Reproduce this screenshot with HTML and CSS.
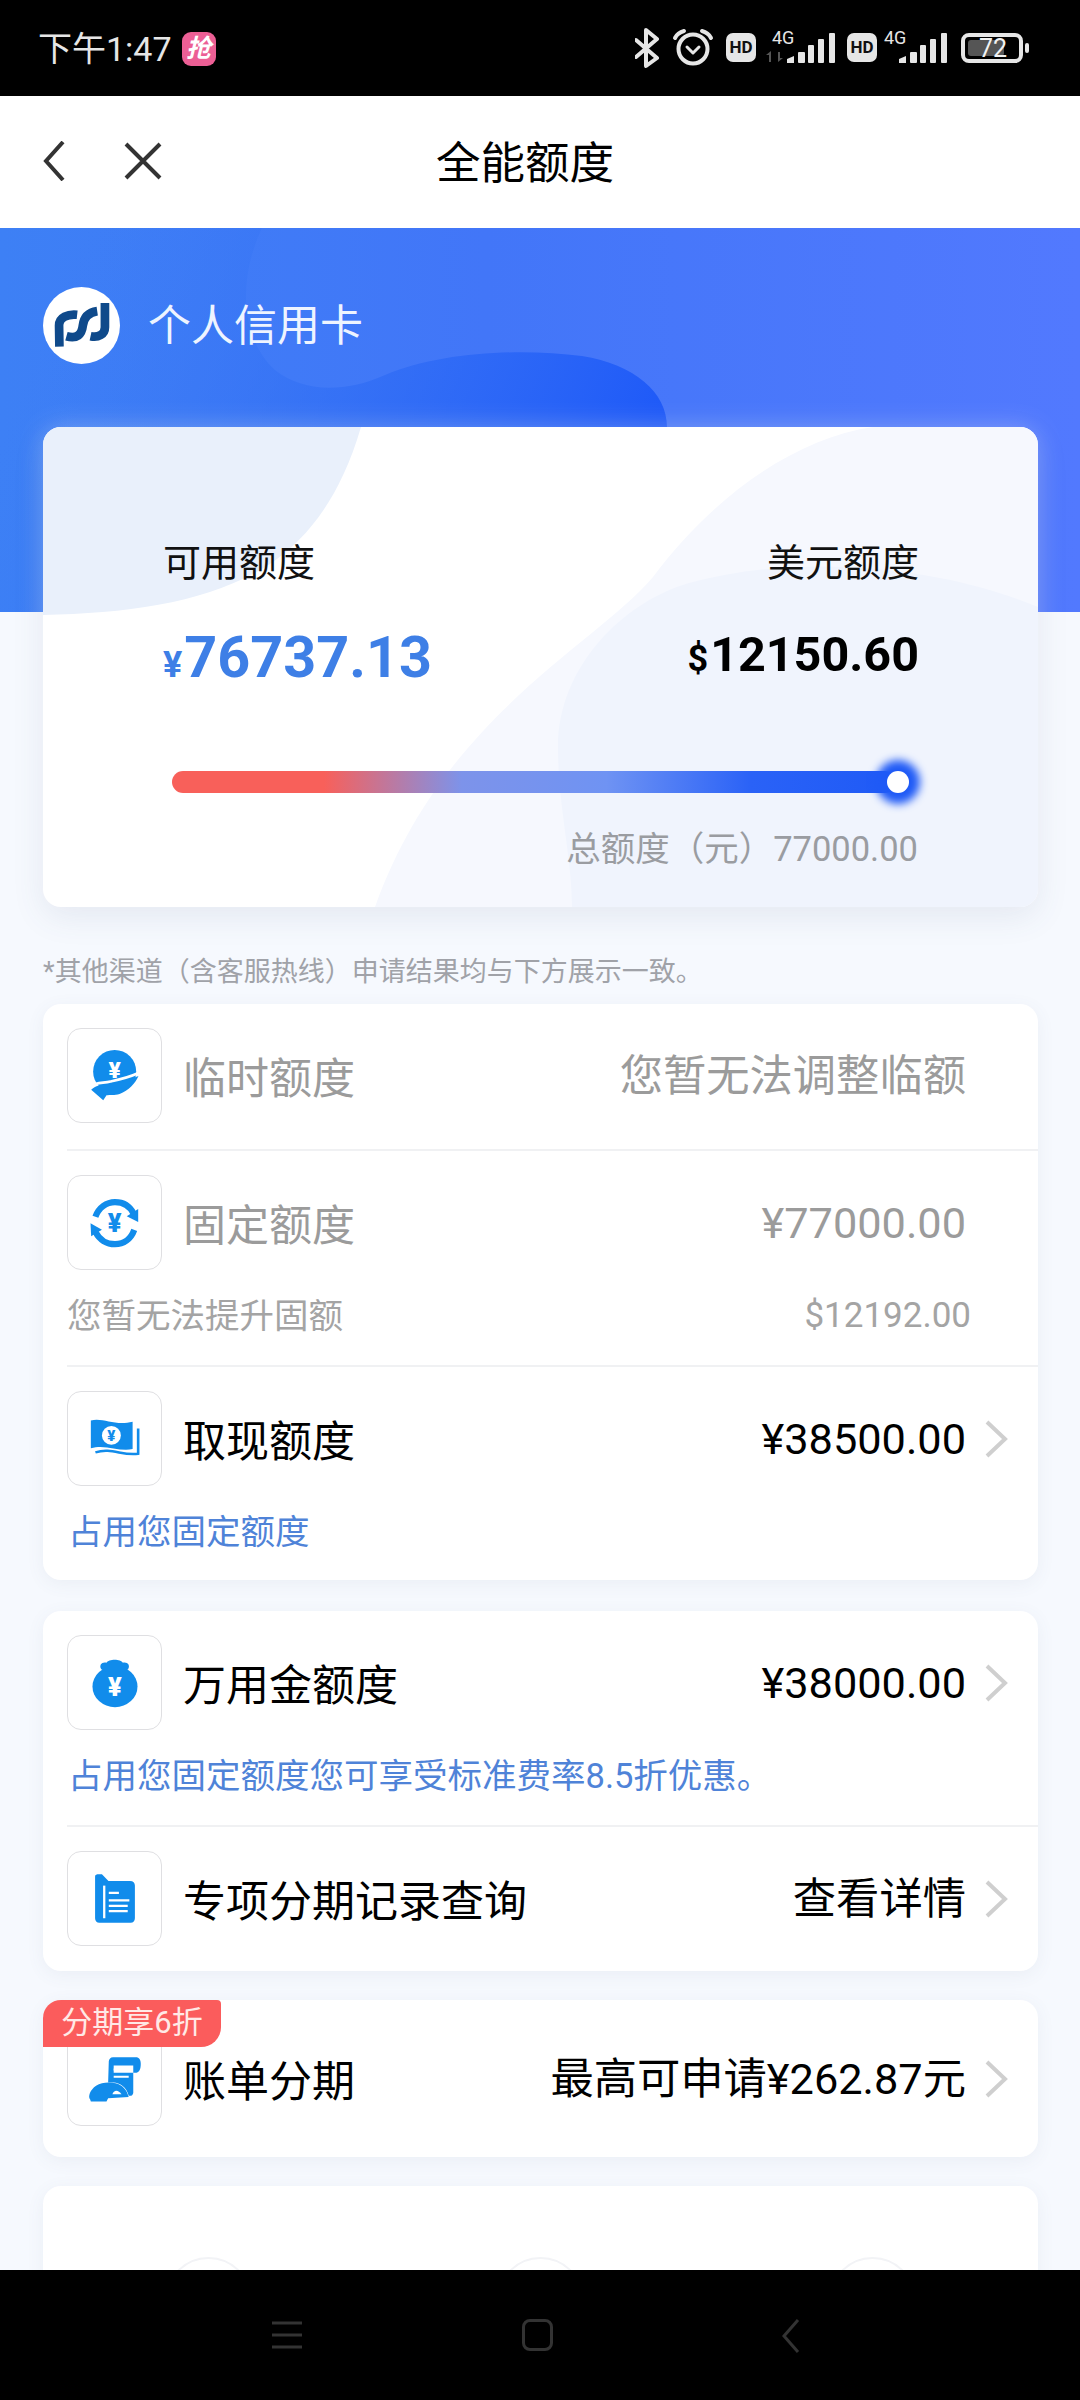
FILE: index.html
```html
<!DOCTYPE html>
<html lang="zh-CN">
<head>
<meta charset="utf-8">
<title>全能额度</title>
<link rel="stylesheet" href="styles.css">
</head>
<body>
<div class="phone">
  <header class="status-bar">
    <div class="status-left">
      <span class="clock">下午1:47</span>
      <span class="promo-tag">抢</span>
    </div>
    <svg class="status-icons" viewBox="635 0 394 96" width="394" height="96" aria-hidden="true">
      <!-- bluetooth -->
      <path class="glyph-line" d="M636 40 L657 58 L646 66 L646 30 L657 39 L636 57"/>
      <!-- alarm clock -->
      <circle class="glyph-line" cx="693" cy="49" r="14.5"/>
      <path class="glyph-line" d="M675 38 C677 34 680 32 684 31 M711 38 C709 34 706 32 702 31"/>
      <path class="glyph-line thin" d="M687 47 L693 53 L699 47"/>
      <!-- first SIM -->
      <rect class="glyph-fill" x="726" y="33" width="30" height="29" rx="7"/>
      <text class="hd-label" x="741" y="53">HD</text>
      <text class="net-label" x="772" y="44">4G</text>
      <path class="glyph-dim" d="M769 62 L769 55 L766 55 L771 51 L771 62 Z M778 52 L778 62 L783 58 L780 58 L780 52 Z"/>
      <g class="glyph-fill">
        <path d="M787 63 V59 L794 56 V63 Z"/>
        <rect x="798" y="52" width="7" height="11" rx="1"/>
        <rect x="808" y="45" width="6" height="18" rx="1"/>
        <rect x="818" y="39" width="6" height="24" rx="1"/>
        <rect x="829" y="33" width="6" height="30" rx="1"/>
      </g>
      <!-- second SIM -->
      <rect class="glyph-fill" x="847" y="33" width="30" height="29" rx="7"/>
      <text class="hd-label" x="862" y="53">HD</text>
      <text class="net-label" x="884" y="44">4G</text>
      <g class="glyph-fill">
        <path d="M899 63 V59 L906 56 V63 Z"/>
        <rect x="910" y="52" width="7" height="11" rx="1"/>
        <rect x="920" y="45" width="6" height="18" rx="1"/>
        <rect x="930" y="39" width="6" height="24" rx="1"/>
        <rect x="941" y="33" width="6" height="30" rx="1"/>
      </g>
      <!-- battery -->
      <rect class="glyph-line" x="963" y="35" width="58" height="26" rx="6"/>
      <rect class="glyph-level" x="968" y="40" width="36" height="16" rx="3"/>
      <rect class="glyph-fill" x="1025" y="43" width="4" height="10" rx="2"/>
      <text class="battery-label" x="993" y="57">72</text>
    </svg>
  </header>

  <main class="scroller">
    <nav class="title-bar">
      <div class="title-actions">
        <svg class="nav-back" viewBox="0 0 22 40" width="22" height="40" aria-hidden="true"><path d="M20 1 L3 20 L20 39"/></svg>
        <svg class="nav-close" viewBox="0 0 38 38" width="38" height="38" aria-hidden="true"><path d="M2 2 L36 36 M36 2 L2 36"/></svg>
      </div>
      <h1 class="page-title">全能额度</h1>
    </nav>

    <section class="hero">
      <svg class="hero-art" viewBox="0 0 1080 384" width="1080" height="384" aria-hidden="true">
        <defs>
          <linearGradient id="heroWave" gradientUnits="userSpaceOnUse" x1="60" y1="60" x2="640" y2="290">
            <stop offset="0" stop-color="#3a7cf4" stop-opacity="0"/>
            <stop offset="0.4" stop-color="#3270f4" stop-opacity=".6"/>
            <stop offset="1" stop-color="#1d58f8"/>
          </linearGradient>
        </defs>
        <path fill="url(#heroWave)" d="M0 0 L262 0 C238 50 240 110 275 142 C300 162 340 167 385 147 C440 124 520 120 582 128 C642 138 676 172 665 215 L665 384 L0 384 Z"/>
      </svg>
      <div class="brand">
        <svg class="brand-logo" viewBox="70 50 230 230" width="77" height="77" aria-hidden="true">
          <circle cx="185" cy="165" r="115" fill="#fff"/>
          <g class="brand-mark">
            <path d="M119 228 L118 165 C118 140 145 130 172 133"/>
            <path d="M140 197 C172 206 186 192 189 165 C192 140 205 126 232 122"/>
            <path d="M255 98 L255 170 C255 192 235 202 212 197"/>
          </g>
        </svg>
        <span class="brand-name">个人信用卡</span>
      </div>
    </section>

    <section class="limit-card">
      <svg class="limit-art" viewBox="0 0 995 480" preserveAspectRatio="none" aria-hidden="true">
        <path fill="#e9f0fb" d="M0 0 H318 C296 75 262 112 230 135 C170 175 90 186 0 188 Z"/>
        <path fill="#f6f8fe" d="M830 0 C750 12 670 70 610 150 C550 220 400 290 332 480 H995 V0 Z"/>
        <path fill="#f0f4fd" d="M995 180 C900 140 760 125 646 156 C580 175 515 240 515 320 C515 380 529 430 529 480 H995 Z"/>
      </svg>
      <div class="limit-columns">
        <div class="limit-col">
          <div class="limit-label">可用额度</div>
          <div class="limit-amount cny"><span class="unit">¥</span>76737.13</div>
        </div>
        <div class="limit-col end">
          <div class="limit-label">美元额度</div>
          <div class="limit-amount usd"><span class="unit">$</span>12150.60</div>
        </div>
      </div>
      <div class="meter">
        <div class="meter-track"></div>
        <span class="meter-thumb"></span>
      </div>
      <div class="limit-total">总额度（元）77000.00</div>
    </section>

    <p class="channel-note">*其他渠道（含客服热线）申请结果均与下方展示一致。</p>

    <section class="panel is-lead">
      <div class="item">
        <div class="item-main is-muted">
          <span class="icon-box">
            <svg viewBox="82 55 285 285" aria-hidden="true">
              <circle class="ico" cx="225" cy="185" r="66"/>
              <text class="ico-yen on-blue" x="225" y="204" font-size="70">¥</text>
              <path class="ico" d="M153 241 C168 226 185 226 212 224 C240 222 265 212 298 199 C288 222 268 244 240 254 C225 259 210 256 200 258 L190 273 Z"/>
              <path class="ico-cut" d="M150 232 C170 216 190 222 212 216 C240 210 265 205 298 190"/>
            </svg>
          </span>
          <span class="item-title">临时额度</span>
          <span class="item-value">您暂无法调整临额</span>
          <span class="chevron-slot"></span>
        </div>
      </div>
      <div class="item">
        <div class="item-main is-muted">
          <span class="icon-box">
            <svg viewBox="82 495 285 285" aria-hidden="true">
              <path class="ico-ring" d="M166 620 C176 592 200 575 226 575 C252 575 272 588 283 610"/>
              <path class="ico" d="M297 636 L262 618 L297 596 Z"/>
              <path class="ico-ring" d="M285 660 C275 688 252 704 226 704 C200 704 178 690 167 668"/>
              <path class="ico" d="M151 640 L186 660 L153 680 Z"/>
              <text class="ico-yen" x="225" y="668" font-size="78">¥</text>
            </svg>
          </span>
          <span class="item-title">固定额度</span>
          <span class="item-value">¥77000.00</span>
          <span class="chevron-slot"></span>
        </div>
        <div class="item-note is-split">
          <span>您暂无法提升固额</span>
          <span class="note-amount">$12192.00</span>
        </div>
      </div>
      <div class="item">
        <div class="item-main">
          <span class="icon-box">
            <svg viewBox="82 65 285 285" aria-hidden="true">
              <path class="ico" d="M152 152 C190 142 225 170 280 156 L280 240 C240 250 200 224 152 237 Z"/>
              <path class="ico-ring slim" d="M297 177 L297 254 C250 262 215 234 166 250"/>
              <circle class="ico-white" cx="215" cy="198" r="29"/>
              <text class="ico-yen" x="215" y="215" font-size="46">¥</text>
            </svg>
          </span>
          <span class="item-title">取现额度</span>
          <span class="item-value">¥38500.00</span>
          <span class="chevron-slot"><svg class="chevron" viewBox="0 0 23 38" width="23" height="38" aria-hidden="true"><path d="M2 2 L20 19 L2 36"/></svg></span>
        </div>
        <div class="item-note is-link">占用您固定额度</div>
      </div>
    </section>

    <section class="panel">
      <div class="item">
        <div class="item-main">
          <span class="icon-box">
            <svg viewBox="82 48 285 285" aria-hidden="true">
              <ellipse class="ico" cx="226" cy="203" rx="69" ry="63"/>
              <path class="ico" d="M184 150 C176 138 186 126 200 130 C206 118 244 118 250 130 C264 126 274 138 266 150 L250 158 H200 Z"/>
              <text class="ico-yen on-blue" x="226" y="231" font-size="78">¥</text>
            </svg>
          </span>
          <span class="item-title">万用金额度</span>
          <span class="item-value">¥38000.00</span>
          <span class="chevron-slot"><svg class="chevron" viewBox="0 0 23 38" width="23" height="38" aria-hidden="true"><path d="M2 2 L20 19 L2 36"/></svg></span>
        </div>
        <div class="item-note is-link">占用您固定额度您可享受标准费率8.5折优惠。</div>
      </div>
      <div class="item">
        <div class="item-main">
          <span class="icon-box">
            <svg viewBox="82 697 285 285" aria-hidden="true">
              <path class="ico" d="M165 772 C165 766 170 765 176 765 H186 L206 786 H272 C282 786 287 792 287 800 V900 C287 908 282 914 274 914 H178 C170 914 165 908 165 900 Z"/>
              <path class="ico-cut slim" d="M193 800 V900"/>
              <path class="ico-cut slim" d="M207 822 H238 M207 845 H270 M207 862 H265 M207 878 H265"/>
            </svg>
          </span>
          <span class="item-title">专项分期记录查询</span>
          <span class="item-value">查看详情</span>
          <span class="chevron-slot"><svg class="chevron" viewBox="0 0 23 38" width="23" height="38" aria-hidden="true"><path d="M2 2 L20 19 L2 36"/></svg></span>
        </div>
      </div>
    </section>

    <section class="panel has-ribbon">
      <span class="ribbon">分期享6折</span>
      <div class="item">
        <div class="item-main">
          <span class="icon-box">
            <svg viewBox="82 275 285 285" aria-hidden="true">
              <path class="ico" d="M220 352 H290 C300 352 305 360 305 372 C305 390 300 400 288 400 L282 400 V378 H222 V400 H282 V462 C280 470 275 472 268 470 C262 445 240 430 222 430 H205 L207 365 C208 358 212 352 220 352 Z"/>
              <path class="ico-cut thin" d="M222 390 H268 M222 412 H268"/>
              <path class="ico" d="M150 482 C142 474 150 452 168 440 C185 428 210 428 228 432 C250 438 262 452 268 474 L205 478 L200 488 L152 488 Z"/>
              <path class="ico-white" d="M218 466 C222 452 236 450 246 466 Z"/>
            </svg>
          </span>
          <span class="item-title">账单分期</span>
          <span class="item-value">最高可申请¥262.87元</span>
          <span class="chevron-slot"><svg class="chevron" viewBox="0 0 23 38" width="23" height="38" aria-hidden="true"><path d="M2 2 L20 19 L2 36"/></svg></span>
        </div>
      </div>
    </section>

    <section class="panel shortcuts">
      <span class="shortcut"></span>
      <span class="shortcut"></span>
      <span class="shortcut"></span>
    </section>
  </main>

  <footer class="system-nav">
    <svg viewBox="0 0 30 28" width="30" height="28" class="sys-menu" aria-hidden="true"><path d="M0 2 H30 M0 14 H30 M0 26 H30"/></svg>
    <span class="sys-home"></span>
    <svg viewBox="0 0 18 34" width="18" height="34" class="sys-back" aria-hidden="true"><path d="M16 1 L2 17 L16 33"/></svg>
  </footer>
</div>
</body>
</html>
```

FILE: styles.css
```css
* { box-sizing: border-box; }

html, body {
  margin: 0;
  padding: 0;
  background: #000;
}

body {
  font-family: Roboto, "Noto Sans CJK SC", sans-serif;
  color: #111;
}

.phone {
  width: 1080px;
  height: 2400px;
  display: flex;
  flex-direction: column;
  overflow: hidden;
}

/* Status bar */
.status-bar {
  flex: 0 0 96px;
  background: #000;
  display: flex;
  align-items: center;
  justify-content: space-between;
  padding: 0 51px 0 38px;
}

.status-left {
  display: flex;
  align-items: center;
  gap: 10px;
  margin-top: 2px;
}

.clock {
  font-size: 34px;
  line-height: 40px;
  color: #e6e6e6;
}

.promo-tag {
  width: 34px;
  height: 34px;
  border-radius: 9px;
  background: #ec5f95;
  color: #fff;
  font-size: 25px;
  line-height: 34px;
  font-weight: 700;
  font-style: italic;
  text-align: center;
}

.glyph-line {
  fill: none;
  stroke: #e6e6e6;
  stroke-width: 4;
  stroke-linecap: round;
  stroke-linejoin: round;
}
.glyph-line.thin { stroke-width: 3; }
.glyph-fill { fill: #e6e6e6; }
.glyph-dim { fill: #555; }
.glyph-level { fill: #555; }

.hd-label {
  font: 700 17px Roboto, sans-serif;
  fill: #111;
  text-anchor: middle;
}
.net-label {
  font: 400 18px Roboto, sans-serif;
  fill: #e6e6e6;
}
.battery-label {
  font: 400 25px Roboto, sans-serif;
  fill: #f2f2f2;
  text-anchor: middle;
}

/* Scrolling page */
.scroller {
  flex: 1 1 auto;
  min-height: 0;
  overflow: hidden;
  background: #f6f9fe;
}

.title-bar {
  height: 132px;
  background: #fff;
  display: grid;
  grid-template-columns: 180px 1fr 210px;
  align-items: center;
}

.title-actions {
  display: flex;
  align-items: center;
  gap: 59px;
  padding-left: 43px;
  margin-top: -3px;
}

.nav-back path,
.nav-close path {
  fill: none;
  stroke: #333;
  stroke-width: 4;
}

.page-title {
  margin: 3px 0 0;
  font-size: 44.5px;
  line-height: 60px;
  font-weight: 400;
  text-align: center;
  color: #000;
}

/* Blue header */
.hero {
  position: relative;
  height: 384px;
  background: linear-gradient(90deg, #3d80f5 0%, #4276f8 45%, #5279fe 100%);
  overflow: hidden;
}

.hero-art {
  position: absolute;
  left: 0;
  top: 0;
}

.brand {
  position: relative;
  display: flex;
  align-items: center;
  gap: 28px;
  padding: 59px 0 0 43px;
}

.brand-logo { display: block; }

.brand-mark path {
  fill: none;
  stroke: #0f4a8b;
  stroke-width: 26;
}

.brand-name {
  font-size: 43px;
  line-height: 60px;
  color: #eef4ff;
}

/* Limit summary card */
.limit-card {
  position: relative;
  height: 480px;
  margin: -185px 42px 0 43px;
  padding-top: 111px;
  border-radius: 18px;
  background: #fff;
  overflow: hidden;
  box-shadow: 0 10px 32px rgba(70, 90, 130, .1), 0 0 26px rgba(255, 255, 255, .3);
}

.limit-art {
  position: absolute;
  left: 0;
  top: 0;
  width: 100%;
  height: 100%;
}

.limit-columns {
  position: relative;
  display: flex;
  justify-content: space-between;
  padding: 0 119px 0 120px;
}

.limit-col.end { text-align: right; }

.limit-label {
  font-size: 38px;
  line-height: 50px;
  color: #111;
}

.limit-amount {
  margin-top: 30px;
  line-height: 80px;
  font-weight: 700;
  white-space: nowrap;
}

.limit-amount.cny {
  font-size: 57.5px;
  color: #3e7fe6;
}
.limit-amount.cny .unit { font-size: 36px; margin-right: 2px; }

.limit-amount.usd {
  font-size: 48.5px;
  line-height: 74px;
  color: #000;
}
.limit-amount.usd .unit { font-size: 36px; margin-right: 2px; }

.meter {
  position: relative;
  margin: 66px 142px 0 129px;
  height: 22px;
}

.meter-track {
  height: 100%;
  border-radius: 11px;
  background: linear-gradient(90deg, #f8605a 0%, #f8605a 21%, #7d93ea 40%, #6f93f3 60%, #2a62f7 80%, #1f5af6 100%);
}

/* Thumb sits over the track end */
.meter-thumb {
  position: absolute;
  right: -13px;
  top: 0;
  width: 22px;
  height: 22px;
  border-radius: 50%;
  background: #fff;
  box-shadow: 0 0 8px 11px #1f5af6;
}

.limit-total {
  position: relative;
  margin: 34px 120px 0 0;
  font-size: 34.5px;
  line-height: 44px;
  text-align: right;
  color: #9a9ca1;
}

.channel-note {
  margin: 45px 0 12px 43px;
  font-size: 27px;
  line-height: 40px;
  color: #a0a2a8;
}

/* Option panels */
.panel {
  position: relative;
  margin: 0 42px 29px 43px;
  border-radius: 18px;
  background: #fff;
  box-shadow: 0 4px 18px rgba(80, 95, 130, .07);
}

.panel.is-lead { margin-bottom: 31px; }

.item {
  padding: 25px 0 27px 24px;
}

.item:first-of-type { padding-top: 24px; }
.item:last-of-type { padding-bottom: 25px; }

.item + .item {
  position: relative;
}

/* Separator runs from the icon column to the panel edge */
.item + .item::before {
  content: "";
  position: absolute;
  left: 24px;
  right: 0;
  top: -1px;
  height: 2px;
  background: #f0f1f3;
}

.item-main {
  display: flex;
  align-items: center;
  padding-right: 30px;
}

.icon-box {
  flex: 0 0 95px;
  width: 95px;
  height: 95px;
  border: 1.5px solid #dfdfe2;
  border-radius: 14px;
  background: #fff;
  margin-right: 21px;
}

.icon-box svg {
  display: block;
  width: 100%;
  height: 100%;
}

.item-title {
  flex: 1 1 auto;
  font-size: 43px;
  line-height: 60px;
  color: #000;
  margin-top: 6px;
}

.item-value {
  font-size: 43.3px;
  line-height: 60px;
  color: #000;
  white-space: nowrap;
  margin-top: 3px;
}

.is-muted .item-title,
.is-muted .item-value { color: #9b9b9b; }

.chevron-slot {
  flex: 0 0 42px;
  display: flex;
  justify-content: flex-end;
  height: 38px;
}

.chevron path {
  fill: none;
  stroke: #cfcfcf;
  stroke-width: 4;
}

.item-note {
  margin-top: 23px;
  font-size: 34.5px;
  line-height: 46px;
  white-space: nowrap;
}

.item-note.is-split {
  display: flex;
  justify-content: space-between;
  padding-right: 67px;
  color: #a4a4a4;
}

.note-amount { font-size: 35px; }

.item-note.is-link {
  color: #4f83d8;
  margin-left: 1px;
}

/* Icon drawing */
.ico { fill: #118ceb; }
.ico-white { fill: #fff; }
.ico-ring {
  fill: none;
  stroke: #118ceb;
  stroke-width: 19;
}
.ico-ring.slim { stroke-width: 8; }
.ico-cut {
  fill: none;
  stroke: #fff;
  stroke-width: 8;
}
.ico-cut.slim { stroke-width: 7; }
.ico-cut.thin { stroke-width: 6; }
.ico-yen {
  font-family: Roboto, sans-serif;
  font-weight: 900;
  text-anchor: middle;
  fill: #118ceb;
}
.ico-yen.on-blue { fill: #fff; }

/* Discount ribbon over the panel corner */
.has-ribbon .item {
  padding-top: 31px;
  padding-bottom: 31px;
}

.ribbon {
  position: absolute;
  z-index: 1;
  left: 0;
  top: 0;
  width: 178px;
  height: 47px;
  border-radius: 18px 4px 20px 0;
  background: #fb5c5c;
  color: #ffe9e6;
  font-size: 31px;
  line-height: 46px;
  text-align: center;
}

/* Panel cut off by the system bar */
.shortcuts {
  height: 300px;
  margin-bottom: 0;
  padding: 71px 0 0;
  display: grid;
  grid-template-columns: repeat(3, 1fr);
  justify-items: center;
  align-items: start;
}

.shortcut {
  width: 87px;
  height: 87px;
  border: 2px solid #f2f3f6;
  border-radius: 50%;
}

/* System navigation */
.system-nav {
  flex: 0 0 130px;
  position: relative;
  background: #000;
}

.sys-menu,
.sys-back,
.sys-home {
  position: absolute;
}

.sys-menu { left: 272px; top: 51px; }
.sys-back { left: 782px; top: 49px; }
.sys-home {
  left: 522px;
  top: 49px;
  width: 31px;
  height: 32px;
  border: 3px solid #333;
  border-radius: 8px;
}

.sys-menu path,
.sys-back path {
  fill: none;
  stroke: #333;
  stroke-width: 3;
}
```
